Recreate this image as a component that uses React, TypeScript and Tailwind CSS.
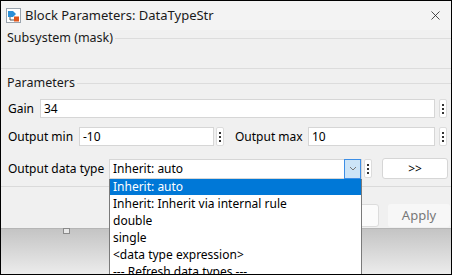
import { X } from "lucide-react";

const font = { fontFamily: '"Noto Sans", "Open Sans", sans-serif' };

function Kebab() {
  return (
    <div className="flex h-[19px] w-[8px] flex-col items-center justify-center gap-[2px] rounded-[2px] border border-[#dcdcdc] bg-white">
      <span className="h-[2px] w-[2px] bg-[#333]" />
      <span className="h-[2px] w-[2px] bg-[#333]" />
      <span className="h-[2px] w-[2px] bg-[#333]" />
    </div>
  );
}

function Field({ value, className }: { value: string; className: string }) {
  return (
    <div className={`flex h-[19px] items-center border border-[#d6d6d6] bg-white px-[3px] text-[12px] text-black ${className}`}>
      {value}
    </div>
  );
}

function Legend({ title }: { title: string }) {
  return (
    <div className="flex h-[16px] shrink-0 items-center gap-[2px] pl-[6px] text-[12.5px] text-[#1a1a1a]">
      <span>{title}</span>
      <span className="h-px flex-1 bg-[#dcdcdc]" />
    </div>
  );
}

const options = [
  "Inherit: auto",
  "Inherit: Inherit via internal rule",
  "double",
  "single",
  "<data type expression>",
  "--- Refresh data types ---",
];

function BlockIcon() {
  return (
    <svg width="15" height="15" viewBox="0 0 15 15">
      <rect x="0.5" y="0.5" width="14" height="14" fill="#fff" stroke="#9aa4ae" />
      <path d="M2 3h5l3 3-3 3H2z" fill="#2b8fd6" />
      <rect x="8" y="8.5" width="5" height="5" fill="#e0561c" />
      <path d="M4 9v3h4" stroke="#555" fill="none" />
    </svg>
  );
}

export default function App() {
  return (
    <div
      className="relative flex h-[275px] w-[452px] flex-col overflow-hidden border border-black bg-[#f0f0f0]"
      style={font}
    >
      <div className="flex h-[29px] shrink-0 items-center bg-[#f3f3f3] pl-[5px] pr-[8px]">
        <BlockIcon />
        <span className="ml-[4px] text-[13px] text-[#1a1a1a]">Block Parameters: DataTypeStr</span>
        <X className="ml-auto h-[15px] w-[15px] text-[#222]" strokeWidth={1.3} />
      </div>

      <Legend title="Subsystem (mask)" />
      <div className="mt-[22px] h-px shrink-0 bg-[#dcdcdc]" />

      <div className="mt-[6px]">
        <Legend title="Parameters" />
      </div>

      <div className="mt-[8px] flex shrink-0 items-center pl-[7px] pr-[4px] text-[12px]">
        <span className="mr-[6px]">Gain</span>
        <Field value="34" className="flex-1" />
        <div className="ml-[4px]"><Kebab /></div>
      </div>

      <div className="mt-[9px] flex shrink-0 items-center pl-[7px] pr-[4px] text-[12px]">
        <span className="w-[71px]">Output min</span>
        <Field value="-10" className="w-[135px]" />
        <div className="ml-[2px]"><Kebab /></div>
        <span className="ml-[11px] w-[73px]">Output max</span>
        <Field value="10" className="flex-1" />
        <div className="ml-[4px]"><Kebab /></div>
      </div>

      <div className="mt-[12px] flex shrink-0 items-center pl-[7px] pr-[3px] text-[12px]">
        <span className="w-[101px]">Output data type</span>
        <div className="flex h-[20px] w-[253px] items-center border border-[#d6d6d6] bg-white pl-[3px]">
          <span className="flex-1">Inherit: auto</span>
          <div className="flex h-[20px] w-[17px] items-center justify-center border border-[#3c8ee6] bg-[#cce4f7]">
            <svg width="8" height="5" viewBox="0 0 8 5">
              <path d="M1 1l3 3 3-3" stroke="#777" fill="none" strokeWidth="1" />
            </svg>
          </div>
        </div>
        <div className="ml-[2px]"><Kebab /></div>
        <div className="ml-[10px] flex h-[21px] flex-1 items-center justify-center rounded-[3px] border border-[#d6d6d6] bg-white text-[12px]">
          &gt;&gt;
        </div>
      </div>

      <div className="mt-[7px] h-px shrink-0 bg-[#dadada]" />
      <div className="flex h-[41px] shrink-0 items-start justify-end gap-[9px] pr-[1px] pt-[17px]">
        <div className="h-[23px] w-[80px] rounded-[3px] border border-[#dcdcdc] bg-[#fbfbfb]" />
        <div className="flex h-[23px] w-[62px] items-center justify-center rounded-[3px] bg-[#f7f7f7] text-[13px] text-[#777]">
          Apply
        </div>
      </div>
      <div className="relative flex-1 border-t border-[#b5b5b5] bg-gradient-to-b from-[#c4c4c4] to-[#ececec]">
        <div className="absolute left-[62px] top-[-1px] h-[6px] w-[7px] border border-[#8a8a8a] bg-[#e8e8e8]" />
      </div>

      <div className="absolute left-[108px] top-[178px] w-[253px] border border-[#7a7a7a] border-t-0 bg-white text-[12px] text-black">
        {options.map((o, i) => (
          <div
            key={o}
            className={`flex items-center px-[3px] ${i === 0 ? "h-[16px] bg-[#0078d7] text-white" : "h-[17px]"}`}
          >
            {o}
          </div>
        ))}
      </div>
    </div>
  );
}
